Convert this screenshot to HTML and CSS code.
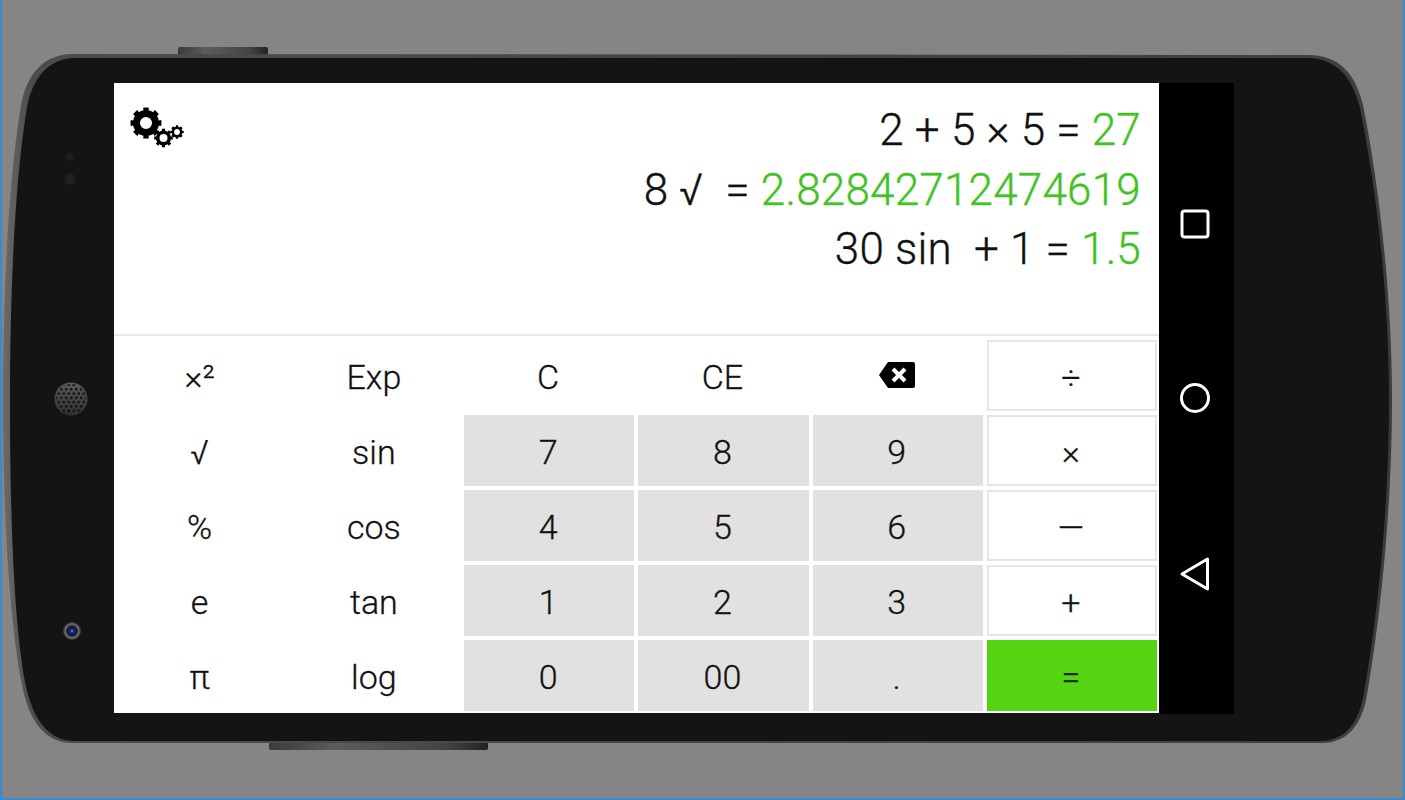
FILE: index.html
```html
<!DOCTYPE html>
<html lang="en">
<head>
<meta charset="utf-8">
<title>Calculator</title>
<link rel="stylesheet" href="styles.css">
</head>
<body>
<main class="device">
  <svg class="shell" width="1405" height="800" viewBox="0 0 1405 800" aria-hidden="true">
    <defs>
      <linearGradient id="btn" x1="0" x2="1" y1="0" y2="0">
        <stop offset="0" stop-color="#3a3a3a"/><stop offset=".3" stop-color="#5c5c5c"/><stop offset=".8" stop-color="#444"/><stop offset="1" stop-color="#222"/>
      </linearGradient>
      <linearGradient id="edge" x1="0" x2="1" y1="0" y2="0">
        <stop offset="0" stop-color="#6a6a6a"/><stop offset=".02" stop-color="#4c4c4c"/><stop offset=".96" stop-color="#404040"/><stop offset="1" stop-color="#3a3a3a"/>
      </linearGradient>
      <radialGradient id="lens">
        <stop offset="0" stop-color="#8fa0e0"/><stop offset=".18" stop-color="#1a2a9a"/><stop offset=".5" stop-color="#141428"/><stop offset=".75" stop-color="#6a6a6e"/><stop offset="1" stop-color="#33333a"/>
      </radialGradient>
      <linearGradient id="grille" x1="0" x2="0" y1="0" y2="1">
        <stop offset="0" stop-color="#5a5a5a"/><stop offset="1" stop-color="#2e2e2e"/>
      </linearGradient>
      <pattern id="holes" width="5" height="8.6" patternUnits="userSpaceOnUse">
        <circle cx="1.25" cy="2.15" r="1.3" fill="#0e0e0e"/>
        <circle cx="3.75" cy="6.45" r="1.3" fill="#0e0e0e"/>
      </pattern>
    </defs>
    <rect x="178" y="47" width="90" height="9" rx="2" fill="url(#btn)"/>
    <rect x="269" y="738" width="219" height="12" rx="2" fill="url(#btn)"/>
    <path fill="url(#edge)" d="M72 54 C44 55 29 72 22 100 C10 165 3 280 3 400 C3 520 10 625 22 685 C29 722 46 743 72 743 L1322 743 C1348 743 1362 724 1367 695 C1380 620 1392 510 1392 400 C1392 290 1378 180 1363 105 C1355 72 1338 55 1308 55 Z"/>
    <path fill="#141414" d="M74 58 C50 59 35 75 28 102 C16 168 10 280 10 400 C10 520 14 622 25 682 C32 718 48 741 74 741 L1320 741 C1346 741 1359 722 1364 693 C1377 620 1389 510 1389 400 C1389 290 1375 182 1360 108 C1352 76 1336 58 1306 58 Z"/>
    <circle cx="71" cy="399" r="16.5" fill="url(#grille)"/>
    <circle cx="71" cy="399" r="15" fill="url(#holes)"/>
    <circle cx="72" cy="631" r="9" fill="url(#lens)"/>
    <circle cx="70" cy="157" r="4" fill="#1f1f1f"/>
    <circle cx="70" cy="179" r="5.5" fill="#202020"/>
  </svg>

  <section class="screen">
    <div class="app">
      <header class="display">
        <svg class="gears" width="56" height="48" viewBox="0 0 56 48" aria-hidden="true">
          <g fill="none" stroke="#000">
            <circle cx="16" cy="18" r="9.5" stroke-width="7"/>
            <circle cx="16" cy="18" r="13.5" stroke-width="4" pathLength="16" stroke-dasharray="1 1" stroke-dashoffset=".5"/>
            <circle cx="33.5" cy="33" r="5.8" stroke-width="3.6"/>
            <circle cx="33.5" cy="33" r="8" stroke-width="2.6" pathLength="16" stroke-dasharray="1 1" stroke-dashoffset=".5"/>
            <circle cx="47" cy="27" r="4.2" stroke-width="2.6"/>
            <circle cx="47" cy="27" r="5.8" stroke-width="2" pathLength="16" stroke-dasharray="1 1" stroke-dashoffset=".5"/>
          </g>
        </svg>
        <div class="history">
          <div class="line">2 + 5 × 5 = <span class="result">27</span></div>
          <div class="line">8 √  = <span class="result">2.82842712474619</span></div>
          <div class="line">30 sin  + 1 = <span class="result">1.5</span></div>
        </div>
      </header>
      <div class="keypad">
        <button class="key">×²</button>
        <button class="key">Exp</button>
        <button class="key">C</button>
        <button class="key">CE</button>
        <button class="key" aria-label="Backspace">
          <svg class="back" width="38" height="28" viewBox="0 0 38 28"><path d="M10 1 H35 a2 2 0 0 1 2 2 V25 a2 2 0 0 1 -2 2 H10 L1 14 Z" fill="#000"/><path d="M15 8 L27 20 M27 8 L15 20" stroke="#fff" stroke-width="4" fill="none"/></svg>
        </button>
        <button class="key op">÷</button>

        <button class="key">√</button>
        <button class="key">sin</button>
        <button class="key num">7</button>
        <button class="key num">8</button>
        <button class="key num">9</button>
        <button class="key op">×</button>

        <button class="key">%</button>
        <button class="key">cos</button>
        <button class="key num">4</button>
        <button class="key num">5</button>
        <button class="key num">6</button>
        <button class="key op">—</button>

        <button class="key">e</button>
        <button class="key">tan</button>
        <button class="key num">1</button>
        <button class="key num">2</button>
        <button class="key num">3</button>
        <button class="key op">+</button>

        <button class="key">π</button>
        <button class="key">log</button>
        <button class="key num">0</button>
        <button class="key num">00</button>
        <button class="key num">.</button>
        <button class="key eq">=</button>
      </div>
    </div>
    <nav class="navbar">
      <svg width="32" height="32" viewBox="0 0 32 32" aria-hidden="true"><rect x="3" y="3" width="26" height="26" rx="2.5" fill="none" stroke="#fff" stroke-width="3"/></svg>
      <svg width="32" height="32" viewBox="0 0 32 32" aria-hidden="true"><circle cx="16" cy="16" r="13.5" fill="none" stroke="#fff" stroke-width="3"/></svg>
      <svg width="32" height="36" viewBox="0 0 32 36" aria-hidden="true"><path d="M3 18 L28.5 3 V33 Z" fill="none" stroke="#fff" stroke-width="3" stroke-linejoin="round"/></svg>
    </nav>
  </section>
</main>
</body>
</html>
```

FILE: styles.css
```css
* { box-sizing: border-box; }

html, body { margin: 0; height: 100%; }

body {
  width: 1405px;
  height: 800px;
  overflow: hidden;
  background: #858585;
  font-family: Roboto, "Liberation Sans", sans-serif;
}

.device {
  position: relative;
  width: 1405px;
  height: 800px;
  padding: 83px 0 0 114px;
}

.device::after {
  content: "";
  position: absolute;
  inset: 0;
  border: solid #3b8bd0;
  border-width: 0 2px 2px 2px;
  pointer-events: none;
}

.shell {
  position: absolute;
  left: 0;
  top: 0;
}

.screen {
  position: relative;
  display: flex;
  width: 1120px;
  height: 631px;
}

.app {
  width: 1045px;
  height: 630px;
  background: #fff;
  display: flex;
  flex-direction: column;
}

.display {
  height: 253px;
  flex: none;
  display: flex;
  justify-content: space-between;
  align-items: flex-start;
  padding: 22px 18px 0 16px;
  border-bottom: 2px solid #e8e8e8;
}

.gears { flex: none; }

.history {
  margin-top: -4px;
  text-align: right;
  font-size: 44px;
  font-weight: 300;
  letter-spacing: 0.22px;
  -webkit-text-stroke: 0.35px currentColor;
  color: #111;
}

.line {
  line-height: 59.5px;
  white-space: pre;
}

.result { color: #42c323; }

.keypad {
  flex: 1;
  display: grid;
  grid-template-columns: repeat(6, 1fr);
  grid-template-rows: repeat(5, 75px);
  margin: 2px 0 0 -0.5px;
}

.key {
  margin: 2px;
  padding: 2px 2px 0 0;
  border: 0;
  background: #fff;
  color: #111;
  font: 300 34px/1 Roboto, "Liberation Sans", sans-serif;
  -webkit-text-stroke: 0.3px currentColor;
  display: flex;
  align-items: center;
  justify-content: center;
}

.num { background: #e1e1e1; }

.op { border: 2px solid #e6e6e6; }

.eq {
  background: #55d511;
  color: #222;
}

.back { display: block; margin-top: -3px; }

.navbar {
  width: 75px;
  background: #000;
  display: flex;
  flex-direction: column;
  align-items: center;
  justify-content: space-between;
  padding: 125px 3px 122px 0;
}
```
